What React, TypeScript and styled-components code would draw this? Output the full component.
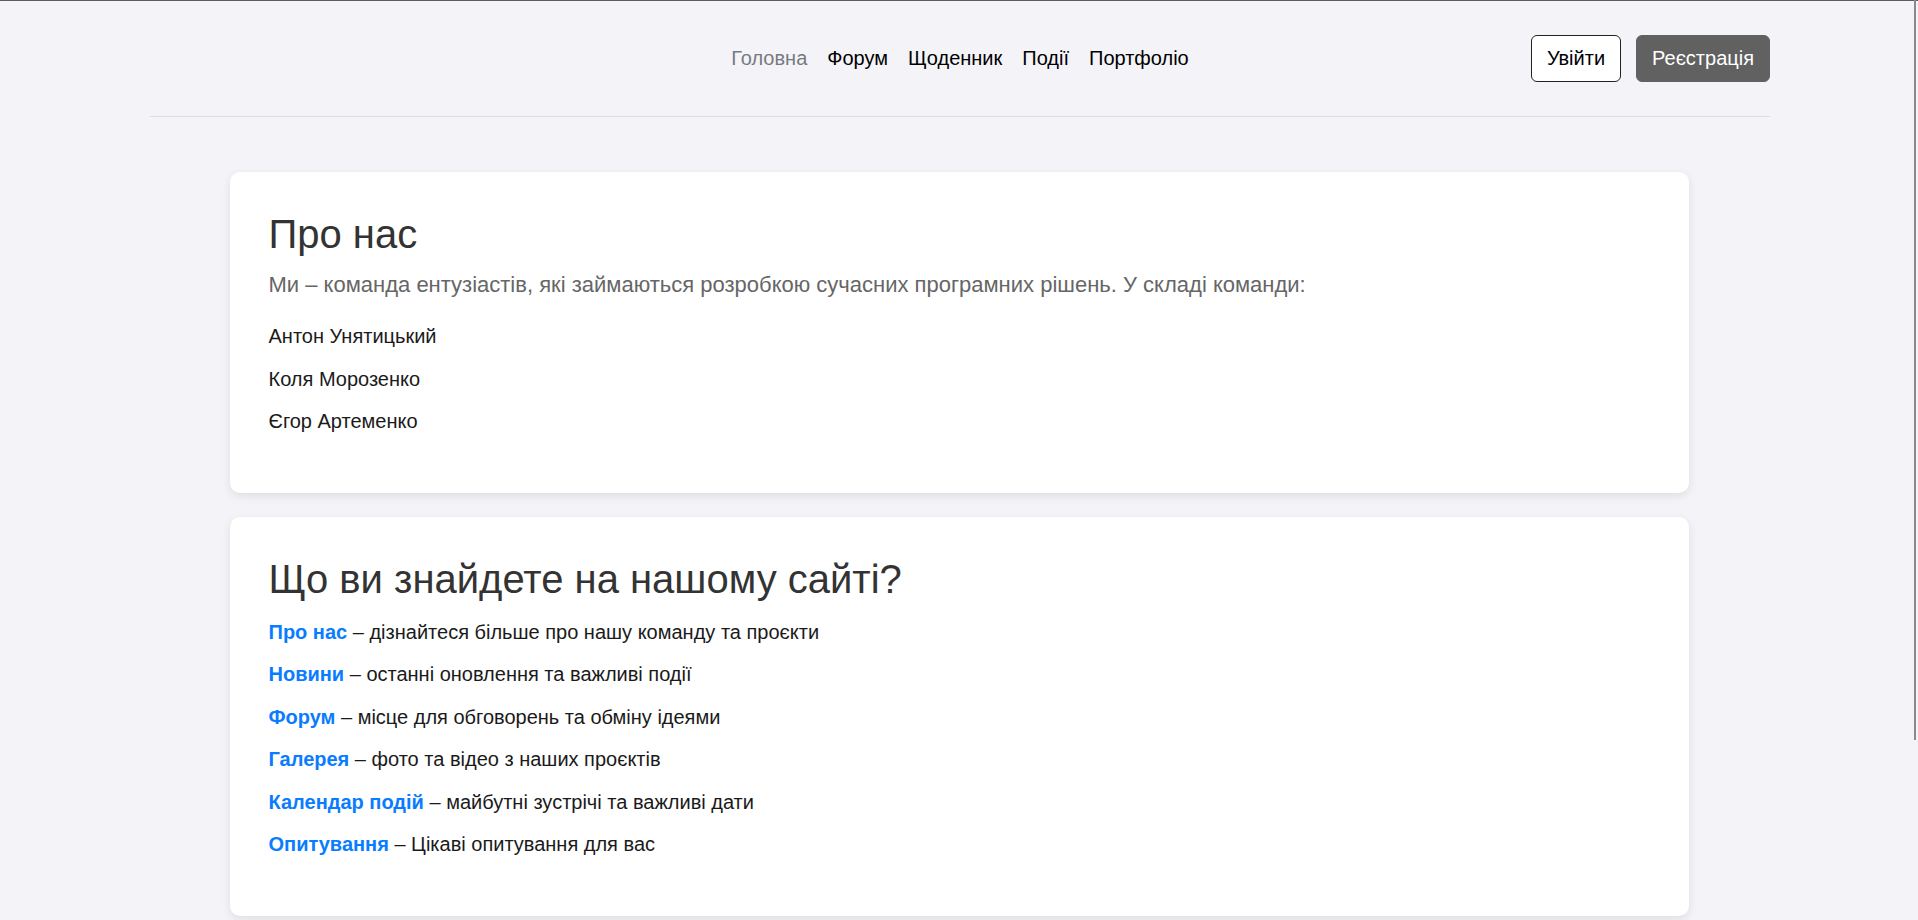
import React from "react";
import styled, { createGlobalStyle } from "styled-components";

const GlobalStyle = createGlobalStyle`
  html, body {
    margin: 0;
    padding: 0;
  }
  body {
    background: #f4f4f8;
    font-family: "Liberation Sans", Arial, sans-serif;
    color: #222;
  }
  * { box-sizing: border-box; }
`;

const Page = styled.div`
  min-height: 920px;
  border-top: 1px solid #5c5c5c;
`;

const Header = styled.header`
  padding: 0 148px 0 150px;
`;

const HeaderInner = styled.div`
  height: 116px;
  display: grid;
  grid-template-columns: 1fr auto 1fr;
  align-items: center;
  border-bottom: 1px solid #dcdce2;
`;

const Nav = styled.nav`
  grid-column: 2;
  display: flex;
  gap: 20px;
`;

const NavLink = styled.a<{ $active?: boolean }>`
  font-size: 20px;
  line-height: 23px;
  color: ${(p) => (p.$active ? "#777a80" : "#000")};
  text-decoration: none;
  cursor: pointer;
`;

const Actions = styled.div`
  grid-column: 3;
  justify-self: end;
  display: flex;
  gap: 15px;
`;

const Button = styled.button<{ $primary?: boolean }>`
  font-family: inherit;
  font-size: 20px;
  line-height: 23px;
  height: 47px;
  padding: 0 15px;
  border-radius: 6px;
  border: 1px solid ${(p) => (p.$primary ? "#616161" : "#222")};
  background: ${(p) => (p.$primary ? "#616161" : "#fff")};
  color: ${(p) => (p.$primary ? "#fff" : "#000")};
  cursor: pointer;
`;

const Main = styled.main`
  display: flex;
  flex-direction: column;
  align-items: center;
  gap: 24px;
  padding-top: 55px;
`;

const Card = styled.section`
  width: 1459px;
  background: #fff;
  border-radius: 10px;
  box-shadow: 0 3px 10px rgba(0, 0, 0, 0.09);
  padding: 40px 39px 60px;
`;

const Title = styled.h2<{ $gap: number }>`
  margin: 0 0 ${(p) => p.$gap}px;
  font-size: 40px;
  line-height: 44px;
  font-weight: 400;
  color: #333;
`;

const Lead = styled.p`
  margin: 0 0 28px;
  font-size: 22px;
  line-height: 24px;
  color: #666;
`;

const List = styled.div`
  display: flex;
  flex-direction: column;
  gap: 19.5px;
`;

const Item = styled.p`
  margin: 0;
  font-size: 20px;
  line-height: 23px;
  color: #1a1a1a;
`;

const Strong = styled.a`
  color: #0a7cff;
  font-weight: 700;
  text-decoration: none;
`;

const ScrollThumb = styled.div`
  position: fixed;
  top: 0;
  right: 2px;
  width: 2px;
  height: 740px;
  background: #8a8a8a;
`;

const team = ["Антон Унятицький", "Коля Морозенко", "Єгор Артеменко"];

const features = [
  { title: "Про нас", text: "дізнайтеся більше про нашу команду та проєкти" },
  { title: "Новини", text: "останні оновлення та важливі події" },
  { title: "Форум", text: "місце для обговорень та обміну ідеями" },
  { title: "Галерея", text: "фото та відео з наших проєктів" },
  { title: "Календар подій", text: "майбутні зустрічі та важливі дати" },
  { title: "Опитування", text: "Цікаві опитування для вас" },
];

export default function App() {
  return (
    <Page>
      <GlobalStyle />
      <Header>
        <HeaderInner>
          <Nav>
            <NavLink $active>Головна</NavLink>
            <NavLink>Форум</NavLink>
            <NavLink>Щоденник</NavLink>
            <NavLink>Події</NavLink>
            <NavLink>Портфоліо</NavLink>
          </Nav>
          <Actions>
            <Button>Увійти</Button>
            <Button $primary>Реєстрація</Button>
          </Actions>
        </HeaderInner>
      </Header>
      <Main>
        <Card>
          <Title $gap={17}>Про нас</Title>
          <Lead>
            Ми – команда ентузіастів, які займаються розробкою сучасних
            програмних рішень. У складі команди:
          </Lead>
          <List>
            {team.map((n) => (
              <Item key={n}>{n}</Item>
            ))}
          </List>
        </Card>
        <Card>
          <Title $gap={19.5}>Що ви знайдете на нашому сайті?</Title>
          <List>
            {features.map((f) => (
              <Item key={f.title}>
                <Strong>{f.title}</Strong> – {f.text}
              </Item>
            ))}
          </List>
        </Card>
      </Main>
      <ScrollThumb />
    </Page>
  );
}
